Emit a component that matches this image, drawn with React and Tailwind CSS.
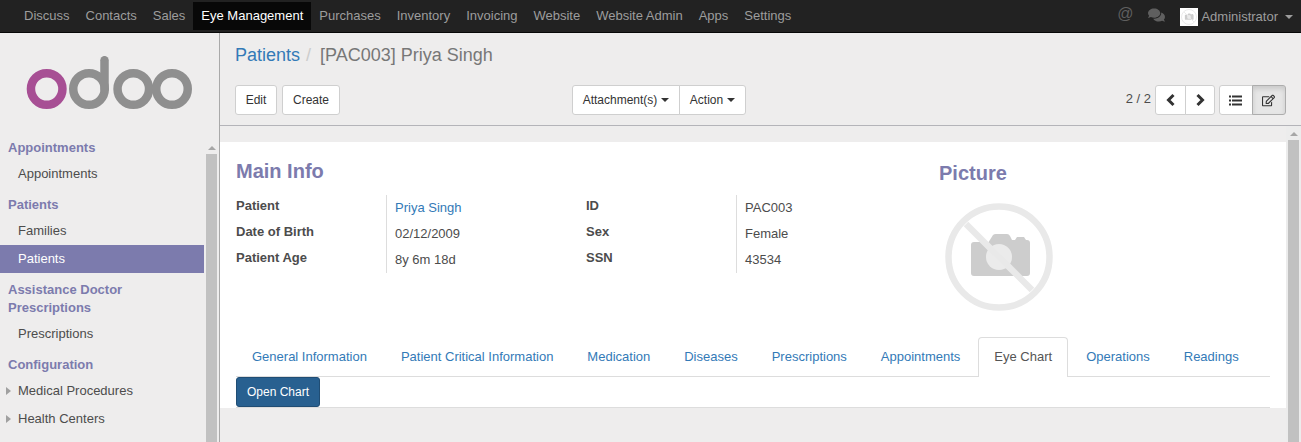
import React from "react";
import { FaComments, FaRegEdit } from "react-icons/fa";

const navItems = ["Discuss", "Contacts", "Sales", "Eye Management", "Purchases", "Inventory", "Invoicing", "Website", "Website Admin", "Apps", "Settings"];
const tabs = ["General Information", "Patient Critical Information", "Medication", "Diseases", "Prescriptions", "Appointments", "Eye Chart", "Operations", "Readings"];

function Caret({ className = "" }) {
  return <span className={"inline-block w-0 h-0 border-x-[4px] border-x-transparent border-t-[4px] border-t-current ml-[4px] align-middle " + className} />;
}

function NoPhoto({ size, ring = "#e9e9e9", body = "#cdcdcd" }) {
  return (
    <svg width={size} height={size} viewBox="0 0 108 108">
      <circle cx="54" cy="54" r="50.5" fill="none" stroke={ring} strokeWidth="6.5" />
      <path d="M29 39 h11 l3 1 l5-8 q1-1 3-1 h11 q2 0 3 2 l2 4 h3 l2-3 h7 l2 3 h1 a3 3 0 0 1 3 3 v30 a3 3 0 0 1-3 3 H29 a3 3 0 0 1-3-3 V42 a3 3 0 0 1 3-3 z" fill={body} />
      <circle cx="54" cy="54" r="13" fill="#ebebeb" />
      <line x1="21" y1="21" x2="87" y2="87" stroke={ring} strokeWidth="6.5" />
    </svg>
  );
}

function OdooLogo() {
  return (
    <svg width="168" height="56" viewBox="0 0 168 56">
      <circle cx="20.7" cy="33" r="15.75" fill="none" stroke="#a74f94" strokeWidth="8.5" />
      <circle cx="63" cy="33" r="15.75" fill="none" stroke="#8f8f8f" strokeWidth="8.5" />
      <line x1="78.5" y1="33" x2="78.5" y2="4.2" stroke="#8f8f8f" strokeWidth="8.5" strokeLinecap="round" />
      <circle cx="107.3" cy="33" r="15.75" fill="none" stroke="#8f8f8f" strokeWidth="8.5" />
      <circle cx="146" cy="33" r="15.75" fill="none" stroke="#8f8f8f" strokeWidth="8.5" />
    </svg>
  );
}

function Chevron({ dir }) {
  return (
    <svg width="12" height="14" viewBox="0 0 12 14" className="text-[#333333]">
      <polyline points={dir === "left" ? "8.5,2 3.5,7 8.5,12" : "3.5,2 8.5,7 3.5,12"} fill="none" stroke="currentColor" strokeWidth="3" />
    </svg>
  );
}

function ListGlyph() {
  return (
    <svg width="13" height="11" viewBox="0 0 13 11" className="text-[#333333] -ml-[1px]">
      <path d="M0 0.5h2v2H0zM3 0.5h10v2H3zM0 4.5h2v2H0zM3 4.5h10v2H3zM0 8.5h2v2H0zM3 8.5h10v2H3z" fill="currentColor" />
    </svg>
  );
}

function SectionTitle({ children, className = "" }) {
  return <div className={"px-2 mb-[3px] font-bold text-[#7c7bad] leading-[18px] " + className}>{children}</div>;
}

function MenuLink({ children, active, expandable }) {
  return (
    <div className={"h-[28px] flex items-center relative pl-[18px] " + (active ? "bg-[#7c7bad] text-white" : "text-[#4c4c4c]")}>
      {expandable && <span className="absolute left-[6px] top-[10px] w-0 h-0 border-y-[4px] border-y-transparent border-l-[5px] border-l-[#a0a0a0]" />}
      {children}
    </div>
  );
}

function Field({ label, value, link }) {
  return (
    <>
      <div className="font-bold text-[#4c4c4c] pr-2 h-[26px] leading-[22px]">{label}</div>
      <div className={"border-l border-[#dddddd] pl-[8px] h-[26px] leading-[26px] " + (link ? "text-[#337ab7]" : "text-[#4c4c4c]")}>{value}</div>
    </>
  );
}

function Btn({ children, className = "" }) {
  return <button className={"h-[30px] bg-white border border-[#cfcfcf] text-[#333333] text-[12px] px-[10px] flex items-center justify-center " + className}>{children}</button>;
}

export default function App() {
  return (
    <div className="w-[1301px] h-[442px] overflow-hidden flex flex-col bg-[#eeeded] text-[13px] font-['Liberation_Sans',Arial,sans-serif] text-[#4c4c4c]">
      <header className="h-[33px] shrink-0 bg-[#222222] border-b border-[#080808] flex items-start pl-[16px] pr-[8px]">
        <nav className="flex pt-[2px]">
          {navItems.map((item) => (
            <span key={item} className={"h-[28px] px-[8px] leading-[28px] " + (item === "Eye Management" ? "bg-[#080808] text-white" : "text-[#9d9d9d]")}>{item}</span>
          ))}
        </nav>
        <div className="ml-auto flex items-center h-[32px] text-[#5f5f5f]">
          <span className="text-[16px] leading-[16px] mr-[15px] -mt-[4px]">@</span>
          <FaComments className="w-[17px] h-[16px] mr-[15px] -mt-[2px]" />
          <span className="w-[18px] h-[18px] bg-white flex items-center justify-center mr-[3px] mt-[1px]"><NoPhoto size={16} /></span>
          <span className="text-[#9d9d9d] mt-[1px]">Administrator</span>
          <Caret className="text-[#9d9d9d] ml-[7px] mt-[1px]" />
        </div>
      </header>

      <div className="flex-1 flex min-h-0">
        <aside className="w-[220px] shrink-0 border-r border-[#a9a9a9] flex bg-[#eeeded] overflow-hidden">
          <div className="w-[204px] shrink-0">
            <div className="h-[105px] pl-[26px] pt-[23px]"><OdooLogo /></div>
            <SectionTitle className="mt-[1px]">Appointments</SectionTitle>
            <MenuLink>Appointments</MenuLink>
            <SectionTitle className="mt-[8px]">Patients</SectionTitle>
            <MenuLink>Families</MenuLink>
            <MenuLink active>Patients</MenuLink>
            <SectionTitle className="mt-[8px]">Assistance Doctor<br />Prescriptions</SectionTitle>
            <MenuLink>Prescriptions</MenuLink>
            <SectionTitle className="mt-[8px]">Configuration</SectionTitle>
            <MenuLink expandable>Medical Procedures</MenuLink>
            <MenuLink expandable>Health Centers</MenuLink>
          </div>
          <div className="ml-[2px] w-[11px] pt-[113px] flex flex-col items-center">
            <span className="w-0 h-0 border-x-[4px] border-x-transparent border-b-[4px] border-b-[#a6a6a6] mb-[4px]" />
            <div className="w-[11px] flex-1 bg-[#c1c1c1]" />
          </div>
        </aside>

        <main className="flex-1 min-w-0 flex flex-col">
          <div className="h-[93px] shrink-0 border-b border-[#b4b4b9] pl-[15px] pr-[15px]">
            <div className="text-[18px] h-[52px] pt-[11px] leading-[22px]">
              <span className="text-[#337ab7]">Patients</span>
              <span className="text-[#cccccc] ml-[6px] mr-[9px]">/</span>
              <span className="text-[#777777]">[PAC003] Priya Singh</span>
            </div>
            <div className="flex items-center h-[30px] relative">
              <Btn className="w-[42px] rounded-[3px]">Edit</Btn>
              <Btn className="w-[58px] ml-[5px] rounded-[3px]">Create</Btn>
              <div className="flex ml-[232px]">
                <Btn className="w-[108px] rounded-l-[3px]">Attachment(s)<Caret /></Btn>
                <Btn className="w-[67px] -ml-px rounded-r-[3px]">Action<Caret /></Btn>
              </div>
              <div className="ml-auto flex items-center">
                <span className="text-[#4c4c4c] mr-[4px] -mt-[2px]">2 / 2</span>
                <Btn className="w-[31px] !px-0 rounded-l-[3px]"><Chevron dir="left" /></Btn>
                <Btn className="w-[30px] !px-0 -ml-px rounded-r-[3px]"><Chevron dir="right" /></Btn>
                <Btn className="w-[34px] !px-0 ml-[4px] rounded-l-[3px]"><ListGlyph /></Btn>
                <Btn className="w-[34px] !px-0 -ml-px rounded-r-[3px] !bg-[#e6e6e6] !border-[#adadad] shadow-[inset_0_3px_5px_rgba(0,0,0,0.125)]"><FaRegEdit className="w-[13px] h-[13px] text-[#333333] -ml-[1px]" /></Btn>
              </div>
            </div>
          </div>

          <div className="flex-1 flex min-h-0">
            <div className="w-[1066px] shrink-0 pt-[16px]">
              <section className="bg-white h-[266px] px-[16px] flex flex-col">
                <div className="flex h-[195px]">
                  <div className="w-[703px]">
                    <h2 className="text-[20px] font-bold text-[#7c7bad] leading-[24px] pt-[17px] h-[53px]">Main Info</h2>
                    <div className="grid grid-cols-[150px_200px_150px_1fr]">
                      <Field label="Patient" value="Priya Singh" link />
                      <Field label="ID" value="PAC003" />
                      <Field label="Date of Birth" value="02/12/2009" />
                      <Field label="Sex" value="Female" />
                      <Field label="Patient Age" value="8y 6m 18d" />
                      <Field label="SSN" value="43534" />
                    </div>
                  </div>
                  <div>
                    <h2 className="text-[20px] font-bold text-[#7c7bad] leading-[24px] pt-[19px] h-[61px]">Picture</h2>
                    <div className="ml-[6px]"><NoPhoto size={108} /></div>
                  </div>
                </div>
                <div className="flex h-[40px] border-b border-[#dddddd]">
                  {tabs.map((tab) => (
                    <span key={tab} className={"h-[40px] px-[15px] mr-[2px] leading-[37px] whitespace-nowrap border border-b-0 rounded-t-[4px] " + (tab === "Eye Chart" ? "bg-white border-[#dddddd] text-[#555555]" : "border-transparent text-[#337ab7]")}>{tab}</span>
                  ))}
                </div>
                <div className="border-b border-[#dddddd] h-[31px]">
                  <button className="h-[30px] w-[84px] rounded-[3px] bg-[#286090] border border-[#204d74] text-white text-[12px]">Open Chart</button>
                </div>
              </section>
            </div>
            <div className="w-[15px] bg-[#ececec] px-[2px] flex flex-col items-center pt-[6px]">
              <span className="w-0 h-0 border-x-[4px] border-x-transparent border-b-[4px] border-b-[#a6a6a6] mb-[4px]" />
              <div className="w-[11px] flex-1 bg-[#c1c1c1]" />
            </div>
          </div>
        </main>
      </div>
    </div>
  );
}
